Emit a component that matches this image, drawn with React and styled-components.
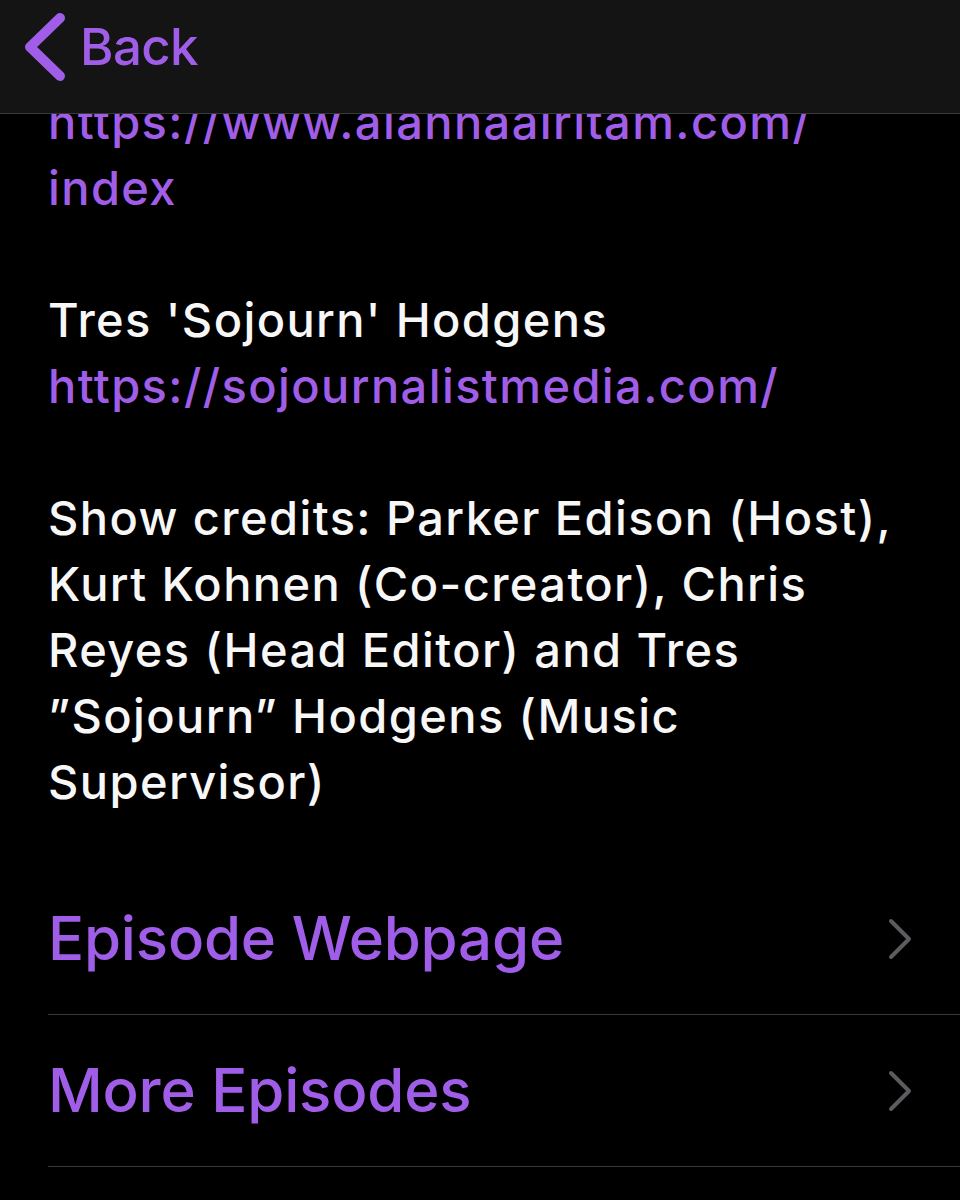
import React from "react";
import styled, { createGlobalStyle } from "styled-components";

const GlobalStyle = createGlobalStyle`
  html, body {
    margin: 0;
    padding: 0;
    background: #000;
  }
  body {
    font-family: Inter, "Noto Sans", "Liberation Sans", sans-serif;
    -webkit-font-smoothing: antialiased;
  }
`;

const purple = "#a05ee8";

const Page = styled.div`
  width: 960px;
  min-height: 1200px;
  background: #000;
  overflow: hidden;
`;

const NavBar = styled.header`
  position: fixed;
  top: 0;
  left: 0;
  width: 960px;
  height: 113px;
  background: #141414;
  border-bottom: 1px solid #3a3a3a;
  display: flex;
  align-items: flex-start;
  z-index: 2;
`;

const BackButton = styled.button`
  display: flex;
  align-items: center;
  gap: 12px;
  margin: 12px 0 0 22px;
  padding: 0;
  border: none;
  background: transparent;
  color: ${purple};
  font-family: inherit;
  font-size: 51px;
  font-weight: 500;
  letter-spacing: -0.6px;
  line-height: 66px;
  cursor: pointer;
`;

const Content = styled.main`
  padding: 89px 0 0 48px;
`;

const Notes = styled.div`
  display: flex;
  flex-direction: column;
  gap: 66px;
  width: 862px;
`;

const Paragraph = styled.p`
  margin: 0;
  font-size: 47px;
  line-height: 66px;
  font-weight: 500;
  color: #f7f7f7;
  letter-spacing: 1.4px;
`;

const Link = styled.span`
  display: block;
  color: ${purple};
`;

const Rows = styled.ul`
  list-style: none;
  margin: 48px 0 0;
  padding: 0;
`;

const Row = styled.li`
  height: 151px;
  border-bottom: 1px solid #38383a;
  display: flex;
  align-items: center;
  justify-content: space-between;
  padding-right: 46px;
`;

const RowLabel = styled.span`
  font-size: 60px;
  font-weight: 500;
  color: ${purple};
  letter-spacing: -0.2px;
  padding-bottom: 2px;
`;

const Chevron = ({ color = "#5c5c60" }) => (
  <svg width="28" height="44" viewBox="0 0 28 44" fill="none">
    <path
      d="M5 4 L23 22 L5 40"
      stroke={color}
      strokeWidth="4"
      strokeLinecap="round"
      strokeLinejoin="round"
    />
  </svg>
);

const BackChevron = () => (
  <svg width="46" height="70" viewBox="0 0 46 70" fill="none">
    <path
      d="M38 6 L8 35 L38 64"
      stroke={purple}
      strokeWidth="10"
      strokeLinecap="round"
      strokeLinejoin="round"
    />
  </svg>
);

export default function App() {
  return (
    <Page>
      <GlobalStyle />
      <NavBar>
        <BackButton>
          <BackChevron />
          Back
        </BackButton>
      </NavBar>
      <Content>
        <Notes>
          <Paragraph>
            <Link>
              https://www.alannaairitam.com/
              <br />
              index
            </Link>
          </Paragraph>
          <Paragraph>
            Tres 'Sojourn' Hodgens
            <Link>https://sojournalistmedia.com/</Link>
          </Paragraph>
          <Paragraph>
            Show credits: Parker Edison (Host), Kurt Kohnen (Co-creator), Chris
            Reyes (Head Editor) and Tres ”Sojourn” Hodgens (Music Supervisor)
          </Paragraph>
        </Notes>
        <Rows>
          <Row>
            <RowLabel>Episode Webpage</RowLabel>
            <Chevron />
          </Row>
          <Row>
            <RowLabel>More Episodes</RowLabel>
            <Chevron />
          </Row>
        </Rows>
      </Content>
    </Page>
  );
}
